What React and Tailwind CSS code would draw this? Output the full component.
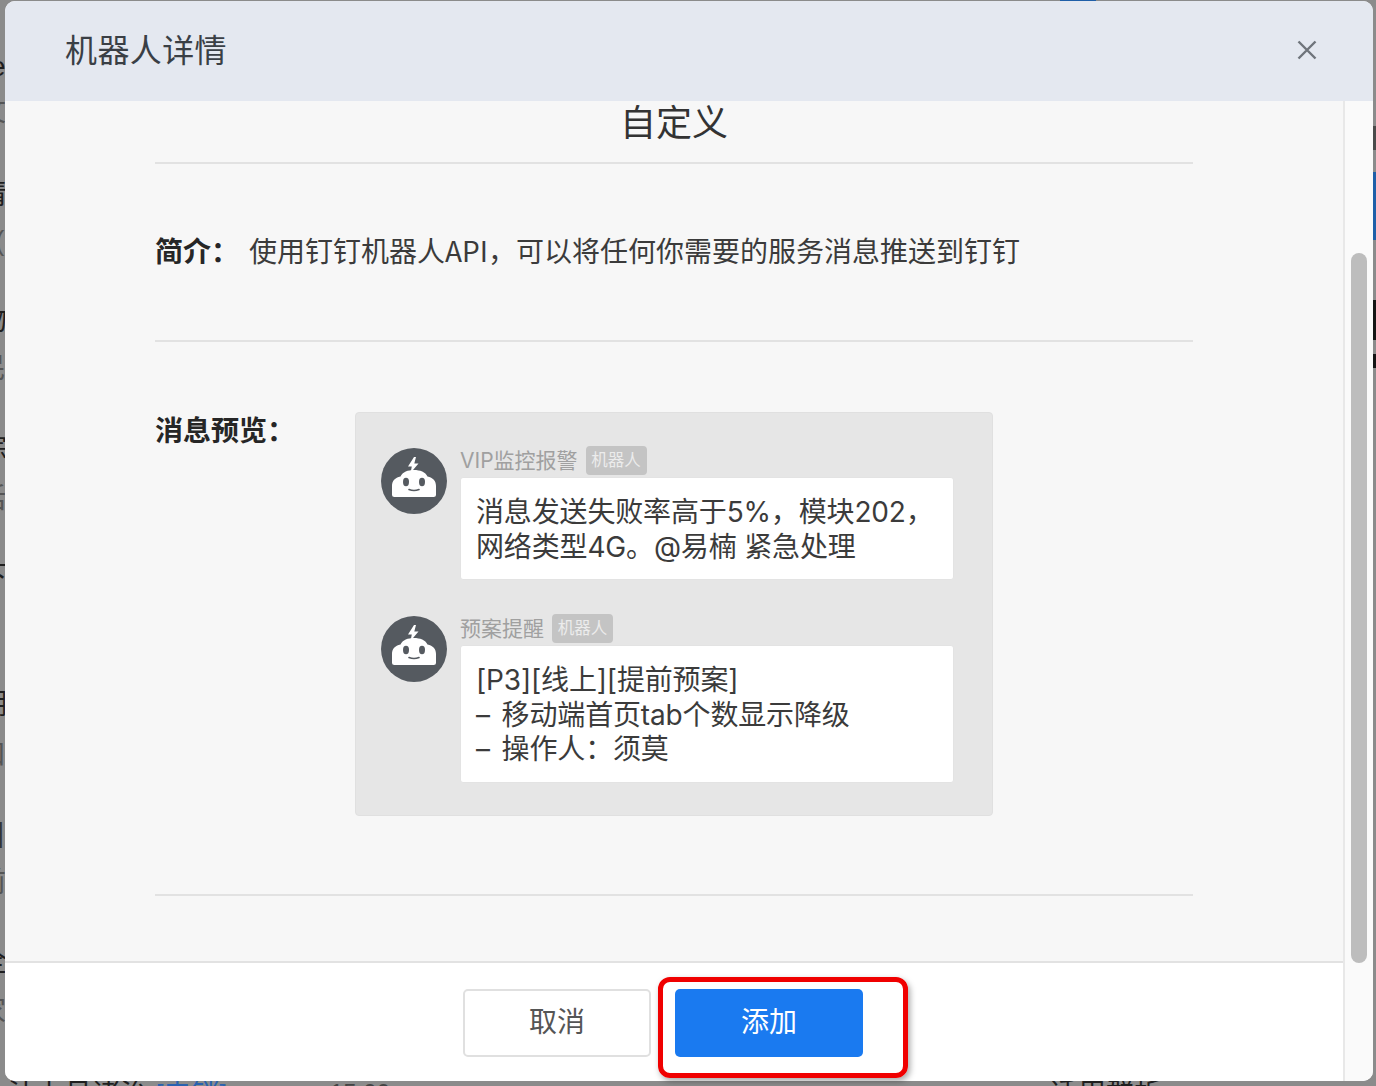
const behindLeft = [
  { pos: '-left-[10px] top-[50px]', text: 'e', cls: 'text-[#1f1f1f]' },
  { pos: '-left-[22px] top-[95px]', text: '文', cls: 'text-[#555]' },
  { pos: '-left-[21px] top-[178px]', text: '清', cls: 'text-[#1f1f1f]' },
  { pos: '-left-[5px] top-[224px]', text: '(', cls: 'text-[#555]' },
  { pos: '-left-[21px] top-[304px]', text: '物', cls: 'text-[#1f1f1f]' },
  { pos: '-left-[22px] top-[352px]', text: '民', cls: 'text-[#555]' },
  { pos: '-left-[21px] top-[432px]', text: '综', cls: 'text-[#1f1f1f]' },
  { pos: '-left-[22px] top-[482px]', text: '话', cls: 'text-[#555]' },
  { pos: '-left-[21px] top-[560px]', text: '下', cls: 'text-[#1f1f1f]' },
  { pos: '-left-[21px] top-[688px]', text: '湖', cls: 'text-[#1f1f1f]' },
  { pos: '-left-[22px] top-[738px]', text: '口', cls: 'text-[#555]' },
  { pos: '-left-[3px] top-[816px]', text: '|', cls: 'text-[#333]' },
  { pos: '-left-[22px] top-[866px]', text: '前', cls: 'text-[#555]' },
  { pos: '-left-[21px] top-[945px]', text: '全', cls: 'text-[#1f1f1f]' },
  { pos: '-left-[22px] top-[995px]', text: '家', cls: 'text-[#555]' },
];

const cjk = { fontFamily: '"Noto Sans CJK SC", sans-serif' };

function RobotAvatar() {
  return (
    <svg width="66" height="66" viewBox="0 0 66 66" className="shrink-0">
      <circle cx="33" cy="33" r="33" fill="#555a60" />
      <path d="M33 9 L27 18.5 L30.8 18.5 L29.5 25 L37.5 15.5 L33.3 15.5 L35 9 Z" fill="#fff" />
      <path
        d="M33 22 C27 22 21.5 24 19.5 28.5 C14 29.5 11 33 11 38 L11 46.5 Q11 49 13.5 49 L52.5 49 Q55 49 55 46.5 L55 38 C55 33 52 29.5 46.5 28.5 C44.5 24 39 22 33 22 Z"
        fill="#fff"
      />
      <ellipse cx="25" cy="34" rx="3" ry="4.2" fill="#555a60" />
      <ellipse cx="41" cy="34" rx="3" ry="4.2" fill="#555a60" />
      <path d="M28 41.5 Q33 43.5 38 41.5" stroke="#555a60" strokeWidth="1.6" fill="none" strokeLinecap="round" />
    </svg>
  );
}

function Message({ name, children }) {
  return (
    <div className="flex gap-[13px]">
      <div className="pt-[3px]">
        <RobotAvatar />
      </div>
      <div className="w-[494px]">
        <div className="flex h-[33px] items-center gap-2 pb-[3px]">
          <span className="text-[21px] leading-[29px] text-[#a0a0a0]">{name}</span>
          <span className="flex h-[29px] w-[61px] items-center justify-center rounded-[4px] bg-[#c4c4c4] text-[16.5px] text-[#ececec]">
            机器人
          </span>
        </div>
        <div className="-mt-px rounded-[3px] border border-[#e3e3e3] bg-white pb-[15px] pl-[15px] pt-[17px] text-[28px] leading-[34.5px] tracking-[-0.15px] text-[#3b3b3b]">
          {children}
        </div>
      </div>
    </div>
  );
}

export default function App() {
  return (
    <div
      className="relative h-[1086px] w-[1376px] overflow-hidden bg-[#8b8b8b]"
      style={{ fontFamily: '"Liberation Sans", "Noto Sans CJK SC", sans-serif' }}
    >
      {/* page behind the dialog, only slivers show */}
      {behindLeft.map((item) => (
        <span key={item.pos} className={`absolute text-[28px] leading-[34px] ${item.pos} ${item.cls}`}>
          {item.text}
        </span>
      ))}
      <div className="absolute left-[1373px] top-[172px] h-[68px] w-[3px] bg-[#1f5fa8]" />
      <div className="absolute left-[1373px] top-[300px] h-[40px] w-[3px] bg-[#151515]" />
      <div className="absolute left-[1373px] top-[354px] h-[14px] w-[3px] bg-[#151515]" />
      <div className="absolute left-[1373px] top-[126px] h-[24px] w-[3px] bg-[#4a4a4a]" />
      <div className="absolute left-[1060px] top-0 h-px w-[36px] bg-[#1f5fa8]" />
      <span className="absolute left-[8px] top-[1078px] whitespace-nowrap text-[28px] leading-[34px] text-[#1f1f1f]">
        汁上月诸治 <span className="text-[#2a62b0]">[电销]</span>
      </span>
      <span className="absolute left-[330px] top-[1078px] text-[24px] leading-[30px] text-[#444]">15:00</span>
      <span className="absolute left-[1050px] top-[1077px] text-[28px] leading-[34px] text-[#1f1f1f]">适用群析</span>

      <div className="absolute left-[5px] top-px flex h-[1080px] w-[1368px] flex-col overflow-hidden rounded-[10px] bg-white">
        <header className="flex h-[100px] shrink-0 items-center justify-between bg-[#e4e8f0] pl-[60px] pr-[56px]">
          <h1 className="text-[32px] font-normal tracking-[0.4px] text-[#3a3f45]">机器人详情</h1>
          <svg width="20" height="20" viewBox="0 0 20 20" className="mt-[-2px]">
            <path d="M1.5 1.5 L18.5 18.5 M18.5 1.5 L1.5 18.5" stroke="#6f747b" strokeWidth="2.4" fill="none" />
          </svg>
        </header>

        <div className="flex min-h-0 flex-1">
          <div className="flex w-[1338px] shrink-0 flex-col">
            <div className="h-[860px] shrink-0 bg-[#f7f7f7] pl-[150px] pr-[150px]">
              <div className="border-b-2 border-[#e2e2e2] pb-[17px] pt-[2px] text-center text-[36px] leading-[42px] text-[#333]">
                自定义
              </div>
              <div
                className="flex h-[178px] items-start border-b-2 border-[#e2e2e2] pt-[66px] text-[28px] leading-[40px] text-[#3b3b3b]"
                style={cjk}
              >
                <span className="w-[94px] shrink-0 font-bold text-[#262626]">简介：</span>
                <span className="whitespace-nowrap">使用钉钉机器人API，可以将任何你需要的服务消息推送到钉钉</span>
              </div>
              <div className="flex h-[554px] items-start border-b-2 border-[#e2e2e2] pt-[70px]">
                <span className="-mt-[3px] w-[200px] shrink-0 text-[28px] font-bold leading-[40px] text-[#262626]" style={cjk}>
                  消息预览：
                </span>
                <div
                  className="flex h-[404px] w-[638px] flex-col gap-[33px] rounded-[4px] border border-[#e0e0e0] bg-[#e6e6e6] pl-[25px] pt-[32px]"
                  style={{ fontFamily: 'Inter, "Noto Sans CJK SC", sans-serif' }}
                >
                  <Message name="VIP监控报警">
                    消息发送失败率高于5%，模块202，
                    <br />
                    网络类型4G。@易楠 紧急处理
                  </Message>
                  <Message name="预案提醒">
                    [P3][线上][提前预案]
                    <br />
                    <span className="mr-[4px]">–</span> 移动端首页tab个数显示降级
                    <br />
                    <span className="mr-[4px]">–</span> 操作人：须莫
                  </Message>
                </div>
              </div>
            </div>
            <footer className="flex flex-1 justify-center gap-[24px] border-t-2 border-[#e2e2e2] bg-white pr-[22px] pt-[26px]">
              <button className="h-[68px] w-[188px] rounded-[5px] border-2 border-[#e0e0e0] bg-white text-[28px] text-[#555]">
                取消
              </button>
              <button className="h-[68px] w-[188px] rounded-[5px] bg-[#1a7af0] text-[28px] text-white">添加</button>
            </footer>
          </div>
          <div className="flex-1 border-l-2 border-[#e8e8e8] bg-[#fafafa] pl-[6px] pt-[152px]">
            <div className="h-[710px] w-[16px] rounded-full bg-[#bdbdbd]" />
          </div>
        </div>
      </div>

      {/* hand-drawn annotation over the add button */}
      <div className="absolute left-[658px] top-[977px] h-[101px] w-[250px] rounded-[12px] border-[5px] border-[#f00000] shadow-[2px_3px_6px_rgba(0,0,0,0.35)]" />
    </div>
  );
}
